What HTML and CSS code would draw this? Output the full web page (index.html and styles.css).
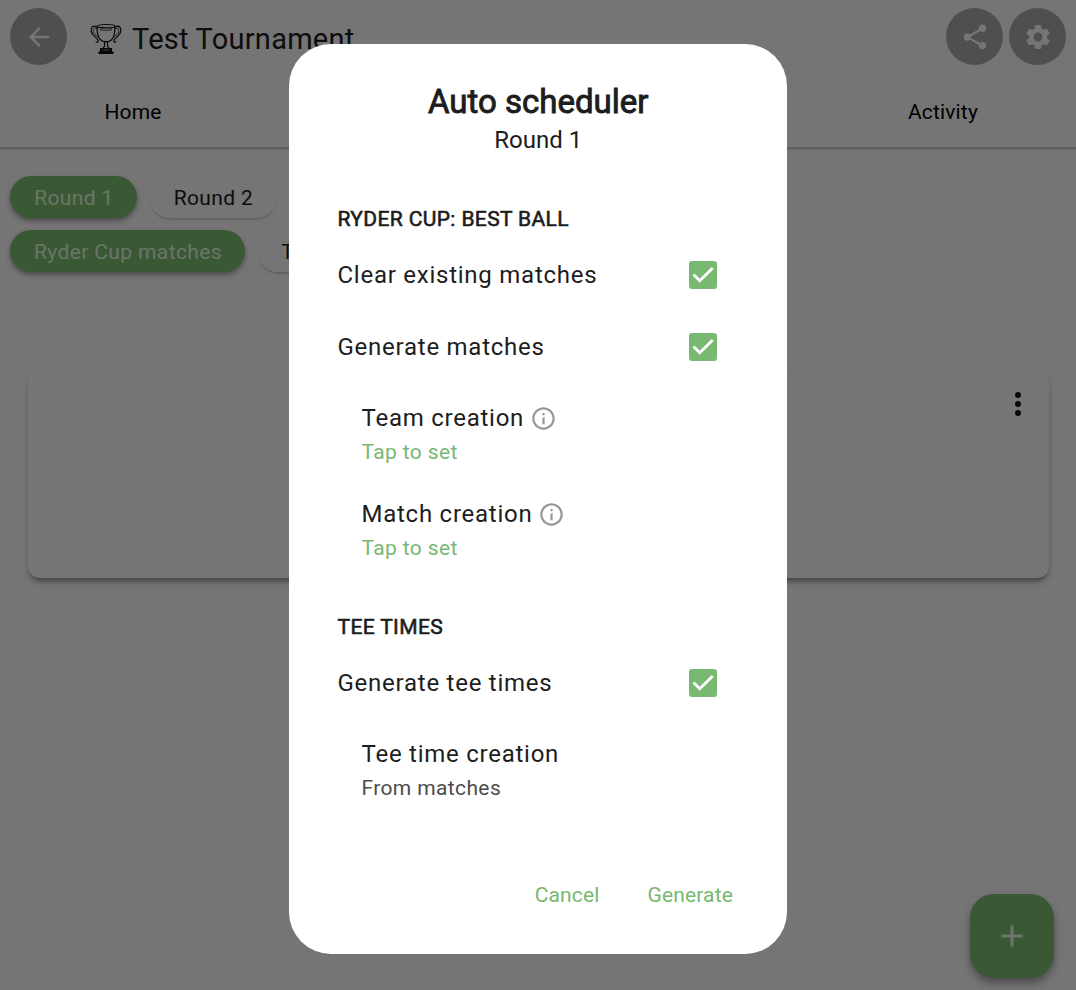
FILE: index.html
```html
<!DOCTYPE html>
<html lang="en">
<head>
<meta charset="utf-8">
<title>Test Tournament</title>
<link rel="stylesheet" href="styles.css">
</head>
<body>
<div class="app">
  <header class="topbar">
    <button class="round-btn" aria-label="Back"><svg class="icon-27" viewBox="0 0 24 24"><path d="M20 11H7.83l5.59-5.59L12 4l-8 8 8 8 1.41-1.41L7.83 13H20z"/></svg></button>
    <svg class="trophy" viewBox="0 0 32 32">
      <g fill="none" stroke="#111" stroke-width="1.2">
        <ellipse cx="16" cy="3.2" rx="9" ry="1.7"/>
        <path d="M7 3.500C7 11 9 18 14.500 18.700h3C23 18 25 11 25 3.500"/>
        <path d="M7 4C3 2 .8 4 1.200 8c.4 5 6 6.300 7 9.500.4 1.700-1.300 2.500-2.400 1M25 4c4-2 6.200 0 5.800 4-.4 5-6 6.300-7 9.500-.4 1.700 1.300 2.500 2.400 1"/>
        <path d="M7.200 6C4.500 4 3 5.500 3.300 8.500c.3 2.300 2.400 3.800 4.900 5.500M24.800 6c2.700-2 4.200-.5 3.900 2.500-.3 2.300-2.400 3.800-4.900 5.500" stroke-width=".8"/>
        <path d="M10 6.500c2 1 10 1 12 0" stroke-width=".8"/>
        <path d="M14.500 19v4l-2 3M17.500 19v4l2 3"/>
      </g>
      <path d="M10 25h12v3.500h1.500V31h-15v-2.500H10z" fill="#111"/>
      <path d="M12.500 27h7" stroke="#aaa" stroke-width=".8"/>
    </svg>
    <h1 class="page-title">Test Tournament</h1>
    <button class="round-btn" aria-label="Share"><svg class="icon-30" viewBox="0 0 24 24"><path d="M18 16.080c-.76 0-1.440.3-1.960.77L8.910 12.700c.05-.23.09-.46.09-.7s-.04-.47-.09-.7l7.050-4.110c.54.5 1.250.81 2.040.81 1.660 0 3-1.340 3-3s-1.340-3-3-3-3 1.340-3 3c0 .24.04.47.09.7L8.040 9.810C7.500 9.310 6.790 9 6 9c-1.660 0-3 1.340-3 3s1.340 3 3 3c.79 0 1.500-.31 2.040-.81l7.120 4.160c-.05.21-.08.43-.08.65 0 1.610 1.310 2.920 2.920 2.920s2.920-1.310 2.920-2.920-1.310-2.920-2.920-2.920z"/></svg></button>
    <button class="round-btn" aria-label="Settings"><svg class="icon-30" viewBox="0 0 24 24"><path d="M19.140 12.940c.04-.3.060-.61.060-.94 0-.32-.02-.64-.07-.94l2.030-1.580c.18-.14.23-.41.12-.61l-1.920-3.320c-.12-.22-.37-.29-.59-.22l-2.390.96c-.5-.38-1.030-.7-1.620-.94l-.36-2.540c-.04-.24-.24-.41-.48-.41h-3.840c-.24 0-.43.17-.47.41l-.36 2.540c-.59.24-1.130.57-1.620.94l-2.390-.96c-.22-.08-.47 0-.59.22L2.740 8.870c-.12.21-.08.47.12.61l2.030 1.580c-.05.3-.09.63-.09.94s.02.64.07.94l-2.030 1.580c-.18.14-.23.41-.12.61l1.920 3.320c.12.22.37.29.59.22l2.390-.96c.5.38 1.030.7 1.620.94l.36 2.540c.05.24.24.41.48.41h3.840c.24 0 .44-.17.47-.41l.36-2.540c.59-.24 1.130-.56 1.620-.94l2.390.96c.22.08.47 0 .59-.22l1.920-3.320c.12-.22.07-.47-.12-.61l-2.010-1.580zM12 15.600c-1.980 0-3.600-1.620-3.600-3.600s1.620-3.600 3.600-3.600 3.600 1.620 3.600 3.600-1.620 3.600-3.600 3.600z"/></svg></button>
  </header>
  <nav class="tabs"><span class="tab">Home</span><span class="tab tab-last">Activity</span></nav>
  <main class="content">
    <div class="chips"><span class="chip chip-on chip-r1">Round 1</span><span class="chip chip-r2">Round 2</span></div>
    <div class="chips"><span class="chip chip-on chip-ryder">Ryder Cup matches</span><span class="chip chip-tee">Tee times</span></div>
    <section class="card"><svg class="more" viewBox="0 0 36 36"><circle cx="18" cy="9" r="3"/><circle cx="18" cy="18" r="3"/><circle cx="18" cy="27" r="3"/></svg></section>
  </main>
  <button class="fab" aria-label="Add"><svg viewBox="0 0 36 36"><path d="M28.500 19.500h-9v9h-3v-9h-9v-3h9v-9h3v9h9z"/></svg></button>
</div>
<div class="scrim">
  <div class="dialog" role="dialog">
    <h2 class="dialog-title">Auto scheduler</h2>
    <p class="dialog-sub">Round 1</p>
    <h3 class="section">RYDER CUP: BEST BALL</h3>
    <div class="check-row"><span>Clear existing matches</span><svg class="check" viewBox="0 0 28 28"><rect width="28" height="28" rx="3"/><path d="M4.500 13.500l6.300 6.200L23.700 7"/></svg></div>
    <div class="check-row"><span>Generate matches</span><svg class="check" viewBox="0 0 28 28"><rect width="28" height="28" rx="3"/><path d="M4.500 13.500l6.300 6.200L23.700 7"/></svg></div>
    <div class="option">
      <div class="option-name">Team creation<svg class="info" viewBox="0 0 24 24"><path d="M11 7h2v2h-2zm0 4h2v6h-2zm1-9C6.480 2 2 6.480 2 12s4.480 10 10 10 10-4.480 10-10S17.520 2 12 2zm0 18c-4.410 0-8-3.590-8-8s3.590-8 8-8 8 3.590 8 8-3.590 8-8 8z"/></svg></div>
      <div class="option-value link">Tap to set</div>
    </div>
    <div class="option">
      <div class="option-name">Match creation<svg class="info" viewBox="0 0 24 24"><path d="M11 7h2v2h-2zm0 4h2v6h-2zm1-9C6.480 2 2 6.480 2 12s4.480 10 10 10 10-4.480 10-10S17.520 2 12 2zm0 18c-4.410 0-8-3.590-8-8s3.590-8 8-8 8 3.590 8 8-3.590 8-8 8z"/></svg></div>
      <div class="option-value link">Tap to set</div>
    </div>
    <h3 class="section section-tee">TEE TIMES</h3>
    <div class="check-row"><span>Generate tee times</span><svg class="check" viewBox="0 0 28 28"><rect width="28" height="28" rx="3"/><path d="M4.500 13.500l6.300 6.200L23.700 7"/></svg></div>
    <div class="option">
      <div class="option-name">Tee time creation</div>
      <div class="option-value">From matches</div>
    </div>
    <div class="actions"><button class="text-btn">Cancel</button><button class="text-btn">Generate</button></div>
  </div>
</div>
</body>
</html>
```
FILE: styles.css
```css
* { box-sizing: border-box; }
body { margin: 0; height: 990px; overflow: hidden; font-family: Roboto, sans-serif; color: #1d1d1d; background: #fefefe; }
h1, h2, h3, p { margin: 0; font-weight: 400; }
button { border: 0; padding: 0; font: inherit; }
.app { height: 990px; }
.topbar { display: flex; align-items: center; height: 73px; padding: 0 10px; }
.round-btn { display: flex; align-items: center; justify-content: center; width: 57px; height: 57px; border-radius: 50%; background: #acacac; }
.round-btn + .round-btn { margin-left: 6px; }
.round-btn svg { fill: #fff; }
.icon-27 { width: 30px; height: 30px; }
.icon-30 { width: 30px; height: 30px; }
.trophy { width: 32px; height: 32px; margin: 5px 0 0 23px; }
.page-title { flex: 1; margin: 4px 0 0 10px; font-size: 29px; letter-spacing: 0.25px; white-space: nowrap; }
.tabs { display: grid; grid-template-columns: repeat(4, 270px); margin-left: -2px; height: 76px; border-bottom: 2px solid #d0d0d0; box-shadow: 0 1px 1px #e8e8e8; }
.tab { padding-top: 27px; text-align: center; font-size: 21px; line-height: 24px; letter-spacing: 0.15px; color: #000; }
.tab-last { grid-column: 4; }
.content { padding: 27px 10px 0; }
.chips { display: flex; gap: 12px; margin-bottom: 12px; }
.chip { display: flex; align-items: center; justify-content: center; height: 42px; padding: 2px 0 0 1px; border-radius: 21px; font-size: 21px; letter-spacing: 0.375px; white-space: nowrap; box-shadow: 0 3px 3px -2px rgba(0, 0, 0, 0.28); }
.chip-on { background: #7ec172; color: #e4ffe0; box-shadow: 0 3px 5px rgba(0, 0, 0, 0.35); }
.chip-r1 { width: 127px; }
.chip-r2 { width: 128px; }
.chip-ryder { width: 235px; }
.chip-tee { width: 142px; }
.card { display: flex; justify-content: flex-end; height: 208px; margin: 98px 17px 0 18px; padding: 16px 13px; border-radius: 12px; box-shadow: 0 5px 5px -2px rgba(0, 0, 0, 0.35), 0 5px 7px rgba(0, 0, 0, 0.1); }
.more { width: 36px; height: 36px; fill: #151515; }
.fab { position: absolute; left: 970px; top: 894px; display: flex; align-items: center; justify-content: center; width: 84px; height: 84px; border-radius: 24px; background: #7ec172; box-shadow: 0 5px 9px rgba(0, 0, 0, 0.35); }
.fab svg { width: 36px; height: 36px; fill: #f0ffed; }
.scrim { position: absolute; inset: 0; display: flex; align-items: flex-start; justify-content: center; padding-top: 44px; background: rgba(0, 0, 0, 0.54); }
.dialog { width: 498px; height: 910px; padding: 39px 48px 0 48.5px; border-radius: 42px; background: #fff; }
.dialog-title { text-align: center; font-size: 33px; line-height: 38px; -webkit-text-stroke: 0.9px #1d1d1d; }
.dialog-sub { margin-top: 4px; text-align: center; font-size: 24px; line-height: 30px; }
.section { margin-top: 50px; font-size: 21px; line-height: 28px; letter-spacing: 0.375px; -webkit-text-stroke: 0.6px #1d1d1d; }
.check-row { display: flex; align-items: center; justify-content: space-between; height: 72px; padding-right: 22px; font-size: 24px; letter-spacing: 0.75px; }
.section + .check-row { margin-top: 6px; }
.check { width: 28px; height: 28px; fill: #78b870; }
.check path { fill: none; stroke: #fff; stroke-width: 3; }
.option { height: 96px; padding: 20px 0 0 24px; }
.option-name { display: flex; align-items: center; height: 30px; font-size: 24px; letter-spacing: 0.75px; }
.info { width: 27px; height: 27px; margin-left: 5.5px; fill: #999; }
.option-value { margin-top: 5px; font-size: 21px; line-height: 28px; letter-spacing: 0.375px; color: #4c4c4c; }
.option-value.link { color: #78b870; }
.section-tee { margin-top: 38px; }
.actions { display: flex; justify-content: flex-end; gap: 48px; margin-top: 66px; padding-right: 6px; }
.text-btn { background: none; color: #78b870; font-size: 21px; line-height: 28px; letter-spacing: 0.15px; }
```
